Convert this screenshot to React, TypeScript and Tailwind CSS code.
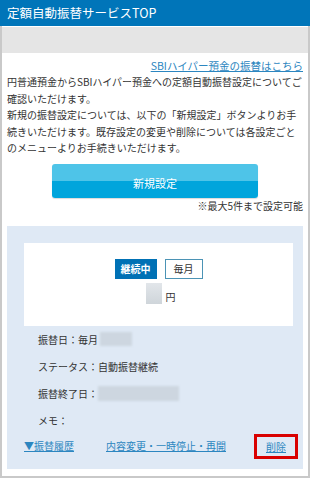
const jp = { fontFamily: '"Noto Sans CJK JP", "Liberation Sans", sans-serif' };

export default function App() {
  return (
    <main
      style={jp}
      className="flex h-[479px] w-[310px] flex-col overflow-hidden bg-white text-[#333]"
    >
      <header className="flex h-[26px] shrink-0 items-center bg-[#0075b9] px-[7px] text-[12.5px] text-white">
        定額自動振替サービスTOP
      </header>
      <div className="flex h-[452px] flex-col border-x-2 border-b-2 border-[#c9c9c9] pt-px">
        <div className="h-[26px] shrink-0 bg-[#e5e5e5]" />

        <div className="px-[5px] pt-[5px]">
          <p className="text-right text-[10.5px] leading-[16px]">
            <a className="text-[#2c86c0] underline">SBIハイパー預金の振替はこちら</a>
          </p>
          <p className="whitespace-nowrap text-[10px] leading-[16.5px]">
            円普通預金からSBIハイパー預金への定額自動振替設定についてご
            <br />
            確認いただけます。
            <br />
            新規の振替設定については、以下の「新規設定」ボタンよりお手
            <br />
            続きいただけます。既存設定の変更や削除については各設定ごと
            <br />
            のメニューよりお手続きいただけます。
          </p>

          <div className="mt-[7px] flex justify-center">
            <button className="relative h-[34px] w-[206px] overflow-hidden rounded-[3px] shadow-[0_1px_1px_rgba(0,0,0,0.15)]">
              <span className="absolute inset-x-0 top-0 h-1/2 bg-[#4ec4e8]" />
              <span className="absolute inset-x-0 bottom-0 h-1/2 bg-[#00a5dc]" />
              <span className="relative text-[11px] text-white">新規設定</span>
            </button>
          </div>
          <p className="mt-px text-right text-[10px] leading-[14px]">※最大5件まで設定可能</p>

          <section className="mt-[13px] bg-[#dfe9f5] pb-[11px] pl-[17px] pr-[10px] pt-[17px]">
            <div className="flex h-[83px] flex-col items-center bg-white pt-[16px]">
              <div className="flex gap-[8px]">
                <span className="flex h-[20px] w-[42px] items-center justify-center bg-[#0071b5] text-[10px] font-bold text-white">
                  継続中
                </span>
                <span className="flex h-[20px] w-[38px] items-center justify-center border border-[#4b93b5] bg-white text-[10px]">
                  毎月
                </span>
              </div>
              <div className="mt-[4px] flex items-end gap-[4px] pl-[4px]">
                <span className="h-[21px] w-[16px] bg-gradient-to-b from-[#e2e6ea] to-[#cfd5da]" />
                <span className="text-[10px] leading-[14px]">円</span>
              </div>
            </div>

            <div className="-ml-[5px] text-[10px]">
              <div className="flex h-[27px] items-center pl-[19px]">
                振替日：毎月
                <span className="ml-[2px] h-[14px] w-[32px] bg-[#cdd6e0] blur-[1px]" />
              </div>
              <div className="flex h-[27px] items-center pl-[19px]">ステータス：自動振替継続</div>
              <div className="flex h-[27px] items-center pl-[19px]">
                振替終了日：
                <span className="h-[15px] w-[81px] bg-[#cdd6e0] blur-[1px]" />
              </div>
              <div className="flex h-[27px] items-center pl-[19px]">メモ：</div>
              <div className="relative flex h-[24px] items-center pl-[5px] text-[#2c86c0]">
                <a className="underline">▼振替履歴</a>
                <a className="ml-[32px] underline">内容変更・一時停止・再開</a>
                <span className="absolute left-[235px] top-0 flex h-[25px] w-[44px] items-center justify-center border-[3px] border-[#d90000]">
                  <a className="underline">削除</a>
                </span>
              </div>
            </div>
          </section>
        </div>
      </div>
    </main>
  );
}
